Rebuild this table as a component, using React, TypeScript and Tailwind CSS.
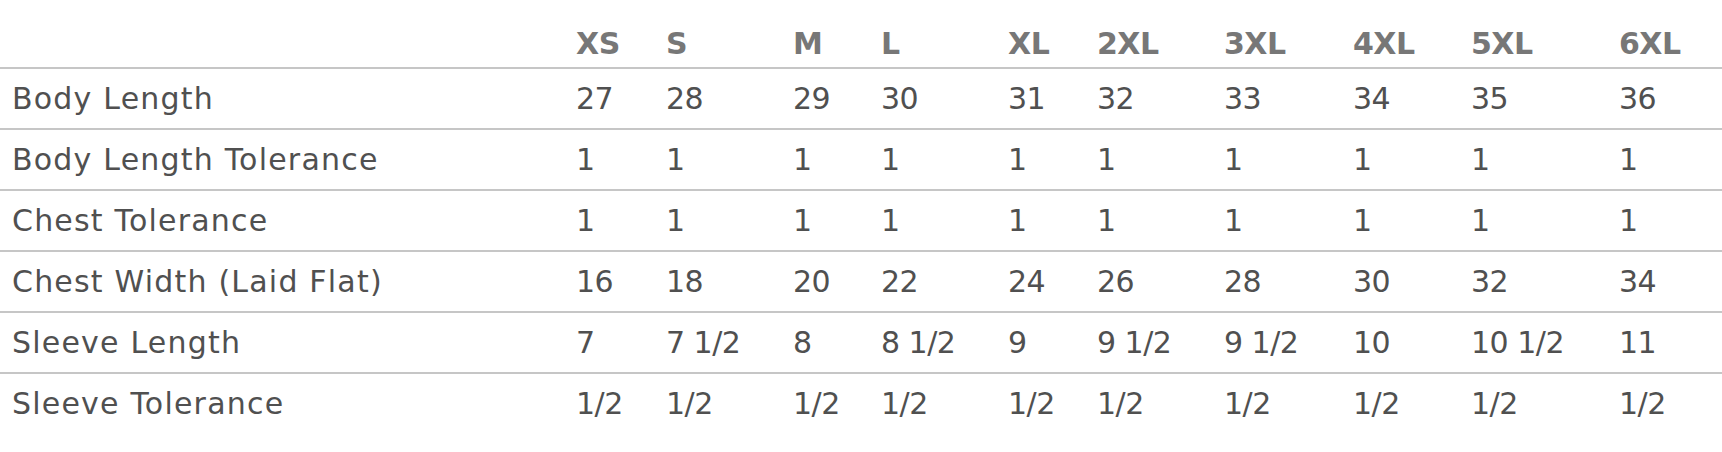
const sizes = ["XS", "S", "M", "L", "XL", "2XL", "3XL", "4XL", "5XL", "6XL"];

const rows: { label: string; values: string[] }[] = [
  { label: "Body Length", values: ["27", "28", "29", "30", "31", "32", "33", "34", "35", "36"] },
  { label: "Body Length Tolerance", values: ["1", "1", "1", "1", "1", "1", "1", "1", "1", "1"] },
  { label: "Chest Tolerance", values: ["1", "1", "1", "1", "1", "1", "1", "1", "1", "1"] },
  { label: "Chest Width (Laid Flat)", values: ["16", "18", "20", "22", "24", "26", "28", "30", "32", "34"] },
  { label: "Sleeve Length", values: ["7", "7 1/2", "8", "8 1/2", "9", "9 1/2", "9 1/2", "10", "10 1/2", "11"] },
  { label: "Sleeve Tolerance", values: ["1/2", "1/2", "1/2", "1/2", "1/2", "1/2", "1/2", "1/2", "1/2", "1/2"] },
];

// column widths follow the auto table layout of the original chart
const grid =
  "grid grid-cols-[576px_90px_127px_88px_127px_89px_127px_129px_118px_148px_1fr]";

export default function App() {
  return (
    <div className="w-[1722px] h-[452px] bg-white font-['DejaVu_Sans',sans-serif] text-[30px] leading-[30px]">
      <div className={`${grid} h-[69px] items-end pb-[8px] border-b-2 border-[#c6c6c6]`}>
        <div />
        {sizes.map((s) => (
          <div key={s} className="font-bold text-[#777777] tracking-[-0.5px]">
            {s}
          </div>
        ))}
      </div>
      {rows.map((row, i) => (
        <div
          key={row.label}
          className={`${grid} items-center ${
            i < rows.length - 1 ? "h-[61px] border-b-2 border-[#c6c6c6]" : "h-[59px]"
          } text-[#505050]`}
        >
          <div className="pl-[12px] whitespace-nowrap tracking-[1.2px]">{row.label}</div>
          {row.values.map((v, j) => (
            <div key={j} className="whitespace-nowrap tracking-[-0.5px]">
              {v}
            </div>
          ))}
        </div>
      ))}
    </div>
  );
}
